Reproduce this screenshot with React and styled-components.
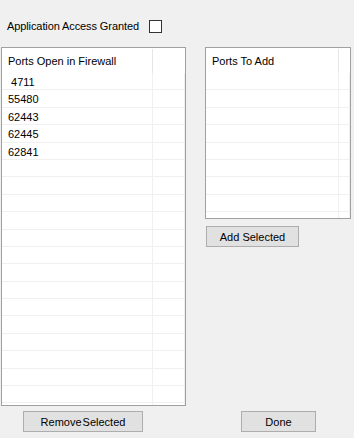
import React from 'react'
import styled, { createGlobalStyle } from 'styled-components'

const GlobalStyle = createGlobalStyle`
  html, body {
    margin: 0;
    padding: 0;
    background: #f0f0f0;
  }
  body {
    font-family: "Liberation Sans", Arial, sans-serif;
    font-size: 11px;
    color: #000;
  }
`

const openPorts = ['\u00a04711', '55480', '62443', '62445', '62841']

function App() {
  return (
    <>
      <GlobalStyle />
      <Window>
        <TopBar>
          <Label>Application Access Granted</Label>
          <CheckBox />
        </TopBar>
        <Main>
          <LeftColumn>
            <ListView title="Ports Open in Firewall" items={openPorts} height={359} colWidth={151} />
            <Button $width={120} $left={22} $top={5} $wordGap={-2}>Remove Selected</Button>
          </LeftColumn>
          <RightColumn>
            <ListView title="Ports To Add" items={[]} height={172} colWidth={133} />
            <Button $width={93} $left={1} $top={7}>Add Selected</Button>
            <Spacer />
            <Button $width={75} $left={36} $top={0}>Done</Button>
          </RightColumn>
        </Main>
      </Window>
    </>
  )
}

function ListView({ title, items, height, colWidth }) {
  const rowCount = Math.ceil((height - 27) / 17.4)
  const rows = []
  for (let i = 0; i < rowCount; i++) {
    rows.push(
      <Row key={i}>
        <Cell $width={colWidth}>{items[i] || ''}</Cell>
        <Cell />
      </Row>
    )
  }
  return (
    <ListBox $height={height}>
      <Header>
        <HeaderCell $width={colWidth}>{title}</HeaderCell>
      </Header>
      {rows}
    </ListBox>
  )
}

export default App

const Window = styled.div`
  width: 354px;
  height: 438px;
  box-sizing: border-box;
  overflow: hidden;
`

const TopBar = styled.div`
  display: flex;
  align-items: center;
  height: 47px;
  padding-left: 7px;
  padding-top: 5px;
  box-sizing: border-box;
`

const Label = styled.span`
  font-size: 11px;
  letter-spacing: -0.1px;
`

const CheckBox = styled.div`
  width: 11px;
  height: 11px;
  border: 1px solid #333;
  background: #fff;
  margin-left: 10px;
`

const Main = styled.div`
  display: flex;
  gap: 19px;
  padding-left: 1px;
  height: 391px;
`

const LeftColumn = styled.div`
  display: flex;
  flex-direction: column;
  width: 185px;
`

const RightColumn = styled.div`
  display: flex;
  flex-direction: column;
  width: 146px;
`

const Spacer = styled.div`
  flex: 1;
`

const ListBox = styled.div`
  height: ${p => p.$height}px;
  box-sizing: border-box;
  border: 1px solid #a0a0a0;
  background: #fff;
  overflow: hidden;
`

const Header = styled.div`
  display: flex;
  height: 25px;
  padding-top: 1px;
  box-sizing: border-box;
`

const HeaderCell = styled.div`
  width: ${p => p.$width}px;
  box-sizing: border-box;
  border-right: 1px solid #e5e5e5;
  padding-left: 6px;
  padding-top: 6px;
`

const Row = styled.div`
  display: flex;
  height: 17.4px;
  box-sizing: border-box;
  border-bottom: 1px solid #f0f0f0;
`

const Cell = styled.div`
  ${p => (p.$width ? `width: ${p.$width}px;` : 'flex: 1;')}
  box-sizing: border-box;
  border-right: 1px solid #f0f0f0;
  padding-left: 6px;
  padding-top: 1px;
  line-height: 17px;
  white-space: pre;
`

const Button = styled.button`
  width: ${p => p.$width}px;
  height: 21px;
  margin-left: ${p => p.$left}px;
  margin-top: ${p => p.$top}px;
  margin-bottom: 6px;
  padding: 0;
  background: #e1e1e1;
  border: 1px solid #adadad;
  border-radius: 0;
  font-family: "Liberation Sans", Arial, sans-serif;
  font-size: 11px;
  color: #000;
  word-spacing: ${p => p.$wordGap || 0}px;
`
